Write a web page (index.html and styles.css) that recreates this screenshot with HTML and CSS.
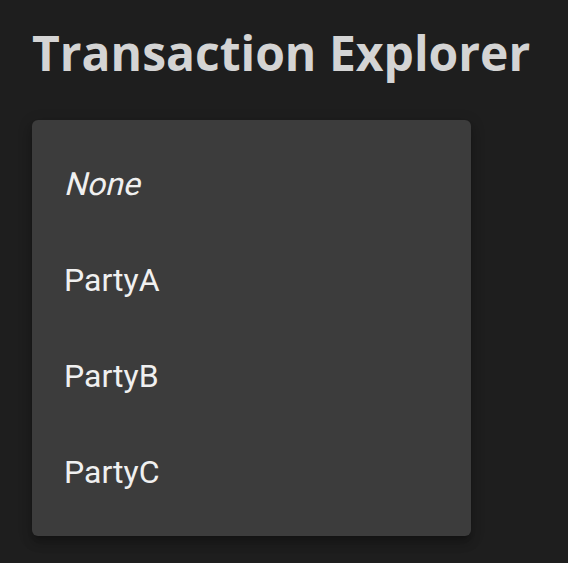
FILE: index.html
```html
<!DOCTYPE html>
<html>
<head>
<meta charset="utf-8">
<link rel="stylesheet" href="styles.css">
</head>
<body>
<div class="page">
  <h1 class="title">Transaction Explorer</h1>
  <ul class="menu">
    <li class="item"><span class="none">None</span></li>
    <li class="item">PartyA</li>
    <li class="item">PartyB</li>
    <li class="item">PartyC</li>
  </ul>
</div>
</body>
</html>
```
FILE: styles.css
```css
html, body {
  margin: 0;
  padding: 0;
  background: #1e1e1e;
}
.page {
  padding: 21px 32px;
}
.title {
  margin: 0 0 35px 0;
  font-family: "Open Sans", sans-serif;
  font-weight: 700;
  font-size: 48px;
  line-height: 64px;
  color: #d4d4d4;
  white-space: nowrap;
}
.menu {
  list-style: none;
  margin: 0;
  padding: 16px 0;
  width: 439px;
  background: #3c3c3c;
  border-radius: 6px;
  box-shadow: 0 5px 5px -3px rgba(0,0,0,0.2), 0 8px 10px 1px rgba(0,0,0,0.14), 0 3px 14px 2px rgba(0,0,0,0.12);
}
.item {
  height: 96px;
  display: flex;
  align-items: center;
  padding: 0 32px;
  font-family: Roboto, sans-serif;
  font-size: 32px;
  color: #f0f0f0;
}
.none {
  display: inline-block;
  transform: skewX(-14deg);
  transform-origin: 0 75%;
}
```
